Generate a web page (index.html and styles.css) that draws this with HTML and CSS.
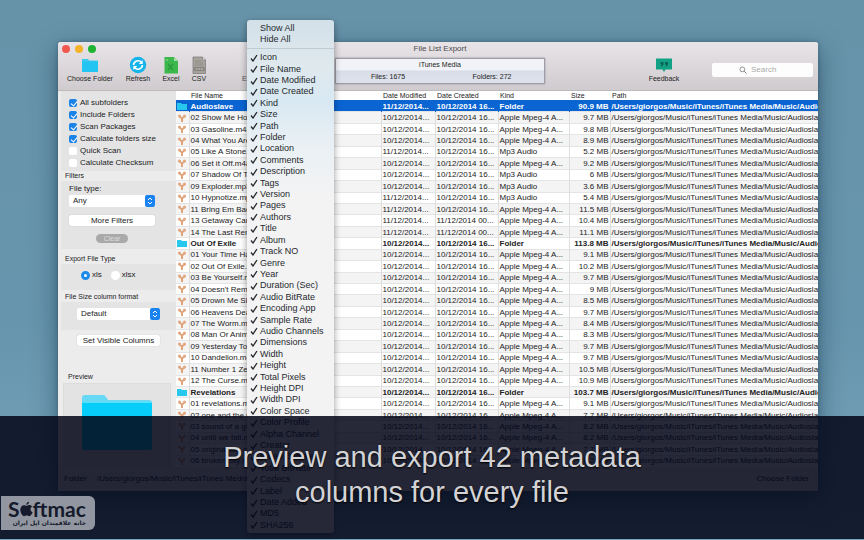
FILE: index.html
```html
<!DOCTYPE html>
<html lang="en">
<head>
<meta charset="utf-8">
<title>File List Export</title>
<link rel="stylesheet" href="styles.css">
</head>
<body>
<main class="desktop">
  <section class="window">
    <header class="chrome">
      <div class="titlebar">
        <div class="lights"><i class="light red"></i><i class="light yellow"></i><i class="light green"></i></div>
        <h1 class="title">File List Export</h1>
      </div>
      <div class="toolbar">
        <div class="tools">
          <button class="tool tool-choose"><svg viewBox="0 0 18 18" class="ico"><path d="M1 3h6l1 1.500h9V16H1z" fill="#3cc9f0"/><path d="M1 5.500h16V16H1z" fill="#22c5f2"/></svg>Choose Folder</button>
          <button class="tool tool-refresh"><svg viewBox="0 0 18 18" class="ico"><circle cx="9" cy="9" r="8.200" fill="#16b4ea"/><path d="M4.500 9a4.500 4.500 0 0 1 8-2.500M13.500 9a4.500 4.500 0 0 1-8 2.500" fill="none" stroke="#fff" stroke-width="1.600"/><path d="M13.700 4v4H9.800zM4.300 14v-4h3.900z" fill="#fff"/></svg>Refresh</button>
          <button class="tool tool-excel"><svg viewBox="0 0 18 18" class="ico"><path d="M2.500 1h9.500l4 4v12.500H2.500z" fill="#3cb74c"/><path d="M12 1v4h4z" fill="#a4dfa9"/><path d="M6 8l5 6M11 8l-5 6" stroke="#2a9a3c" stroke-width="1.600"/><path d="M4 3h2v2H4z" fill="#69cc73"/></svg>Excel</button>
          <button class="tool tool-csv"><svg viewBox="0 0 18 18" class="ico"><path d="M3 1h9.500l3 3v13.500H3z" fill="#a5a39b" stroke="#777" stroke-width=".7"/><path d="M12.500 1v3h3" fill="#ddd" stroke="#777" stroke-width=".6"/><path d="M5 5h6M5 7h8M5 9h8" stroke="#8a8983" stroke-width=".8"/><path d="M4 11h10.500v4H4z" fill="#84827c"/><path d="M5.500 13h2M8.300 13h2M11 13h2" stroke="#b8b6af" stroke-width="1.400"/></svg>CSV</button>
          <button class="tool tool-export"><span class="ico"></span>Export</button>
        </div>
        <div class="status">
          <div class="status-name">iTunes Media</div>
          <div class="status-counts"><span>Files: 1675</span><span>Folders: 272</span></div>
        </div>
        <div class="actions">
          <button class="tool tool-feedback"><svg viewBox="0 0 18 18" class="ico"><path d="M1 2.500h16v11h-6.500L9 16l-1.500-2.500H1z" fill="#12a184"/><path d="M5.500 6h3v2.500L7 10.500H6l.8-2H5.500zM10 6h3v2.500l-1.500 2h-1l.8-2H10z" fill="#0b6353"/></svg>Feedback</button>
          <label class="search"><svg viewBox="0 0 10 10" class="glass"><circle cx="4.200" cy="4.200" r="3" fill="none" stroke="#777" stroke-width="1"/><path d="M6.500 6.500L9.300 9.300" stroke="#777" stroke-width="1.200"/></svg><input type="search" placeholder="Search" aria-label="Search"></label>
        </div>
      </div>
    </header>

    <div class="content">
      <aside class="sidebar">
        <div class="checks">
          <label class="check"><input type="checkbox" checked>All subfolders</label>
          <label class="check"><input type="checkbox" checked>Include Folders</label>
          <label class="check"><input type="checkbox" checked>Scan Packages</label>
          <label class="check"><input type="checkbox" checked>Calculate folders size</label>
          <label class="check"><input type="checkbox">Quick Scan</label>
          <label class="check"><input type="checkbox">Calculate Checksum</label>
        </div>
        <h2 class="group">Filters</h2>
        <div class="panel filters">
          <label class="field" for="type">File type:</label>
          <span class="picker"><select id="type"><option>Any</option></select><svg viewBox="0 0 10 12" class="stepper"><rect width="10" height="12" rx="2" fill="#1b83f0"/><path d="M3 5l2-2 2 2M3 7l2 2 2-2" fill="none" stroke="#fff"/></svg></span>
          <button class="push">More Filters</button>
          <button class="clear">Clear</button>
        </div>
        <h2 class="group">Export File Type</h2>
        <div class="panel radios">
          <label class="radio"><input type="radio" name="format" checked>xls</label>
          <label class="radio"><input type="radio" name="format">xlsx</label>
        </div>
        <h2 class="group">File Size column format</h2>
        <div class="panel sizes">
          <span class="picker"><select aria-label="File Size column format"><option>Default</option></select><svg viewBox="0 0 10 12" class="stepper"><rect width="10" height="12" rx="2" fill="#1b83f0"/><path d="M3 5l2-2 2 2M3 7l2 2 2-2" fill="none" stroke="#fff"/></svg></span>
        </div>
        <button class="push columns">Set Visible Columns</button>
        <h2 class="group preview-title">Preview</h2>
        <div class="preview">
          <svg viewBox="0 0 70 56" class="big-folder"><path d="M0 3q0-3 3-3h18q2 0 3 2l2 3h41q3 0 3 3v6H0z" fill="#67d9f7"/><path d="M0 9q0-2 2-2h66q2 0 2 2v44q0 2-2 2H2q-2 0-2-2z" fill="#06cdf9"/><path d="M1 7.500h68" stroke="#4fe4ff"/></svg>
        </div>
      </aside>

      <div class="listing">
        <table class="files">
          <colgroup><col class="c-icon"><col class="c-name"><col class="c-mod"><col class="c-made"><col class="c-kind"><col class="c-size"><col></colgroup>
          <thead><tr><th></th><th>File Name</th><th>Date Modified</th><th>Date Created</th><th>Kind</th><th>Size</th><th>Path</th></tr></thead>
          <tbody id="rows"></tbody>
        </table>
      </div>
    </div>

    <footer class="pathbar">
      <span class="path-label">Folder</span><span class="path-value">/Users/giorgos/Music/iTunes/iTunes Media</span><button class="path-choose">Choose Folder</button>
    </footer>
  </section>

  <div class="menu">
    <div class="menu-top"><button>Show All</button><button>Hide All</button></div>
    <ul class="menu-list" id="menu"></ul>
  </div>

  <div class="caption"><p>Preview and export 42 metadata<br>columns for every file</p></div>
  <div class="brand">
    <div class="brand-name">S<svg viewBox="0 0 12 14" class="apple"><path d="M8.300.3c.1 1.500-1.200 2.900-2.500 2.800C5.700 1.700 7 .4 8.300.3zM6 4.100c.7 0 1.500-.7 2.600-.7 1 0 2 .5 2.600 1.400-2.200 1.300-1.800 4.400.5 5.200-.5 1.500-1.800 3.600-3.100 3.600-.9 0-1.300-.5-2.400-.5s-1.500.5-2.400.5C2.200 13.600.3 10.500.3 7.700c0-2.700 1.700-4.200 3.300-4.200 1.100 0 1.800.6 2.400.6z" fill="currentColor"/></svg>ftmac</div>
    <div class="brand-sub" lang="fa" dir="rtl">خانه علاقمندان اپل ایران</div>
  </div>
</main>
<script src="script.js"></script>
</body>
</html>
```
FILE: styles.css
```css
* { box-sizing: border-box; }
body { margin: 0; font: 8px/10px "Liberation Sans", Arial, sans-serif; color: #222; }
button, input, select { font: inherit; color: inherit; border: 0; padding: 0; margin: 0; background: none; }
h1, h2, p, ul { margin: 0; padding: 0; font-weight: normal; list-style: none; }
svg { display: block; }

.desktop { position: relative; display: flex; height: 100vh; padding: 42px 46px 49px 58px; overflow: hidden; background: linear-gradient(#6793a9, #6695ad 60%, #78a4bb); }
.window { flex: 1; min-width: 0; display: flex; flex-direction: column; overflow: hidden; border-radius: 3px 3px 0 0; background: #ededee; box-shadow: 0 8px 24px rgba(10, 40, 65, .5), 0 0 4px rgba(10, 30, 50, .3); }

.chrome { height: 49px; background: linear-gradient(#e8e4e8, #cfcbcf); border-bottom: 1px solid #bdbabd; }
.titlebar { display: grid; grid-template-columns: 1fr auto 1fr; align-items: center; height: 14px; padding-left: 4px; }
.lights { display: flex; gap: 5px; }
.light { width: 8px; height: 8px; border-radius: 50%; }
.red { background: #f25850; }
.yellow { background: #f5b32b; }
.green { background: #1fb431; }
.title { font-size: 8px; line-height: 14px; color: #4c4a4c; }
.toolbar { display: grid; grid-template-columns: 277px 210px 1fr; align-items: start; }
.tools, .actions { display: flex; }
.tool { display: flex; flex-direction: column; align-items: center; font-size: 7px; line-height: 10px; color: #222; }
.ico { width: 18px; height: 18px; }
.tool-choose { width: 64px; }
.tool-refresh { width: 32px; }
.tool-excel { width: 34px; }
.tool-csv { width: 22px; }
.tool-export { width: 84px; color: #555; }
.status { display: flex; flex-direction: column; height: 26px; margin-top: 2px; border: 1px solid #9c9da8; background: linear-gradient(#f1f3f8 45%, #d9dde8 50%, #dfe2ec); font-size: 7px; line-height: 12px; text-align: center; box-shadow: 0 0 2px #999; }
.status-counts { display: grid; grid-template-columns: 1fr 1fr; }
.actions { justify-content: flex-end; padding-right: 5px; }
.tool-feedback { width: 40px; margin-right: 28px; }
.search { display: flex; align-items: center; gap: 4px; width: 101px; height: 14px; margin-top: 7px; padding-left: 27px; border-radius: 2px; background: #fdfdfd; }
.glass { width: 8px; height: 8px; }
.search input { width: 50px; outline: 0; }
.search input::placeholder { color: #aaa; }

.content { flex: 1; min-height: 0; display: flex; }
.sidebar { display: flex; flex-direction: column; width: 118px; background: #ececed; }
.checks { padding: 6px 0 2px 8px; background: #e4e4e5; margin-left: 3px; }
.check { display: flex; align-items: center; gap: 3px; height: 12px; }
.check input { appearance: none; width: 8px; height: 8px; border-radius: 2px; background: #fff; }
.check input:checked { background: #1b83e6; }
.check input:checked::after { content: ""; display: block; width: 3px; height: 5px; margin: 1px 0 0 3px; border: solid #fff; border-width: 0 1px 1px 0; rotate: 40deg; }
.group { padding-left: 7px; font-size: 7px; line-height: 10px; }
.panel { margin-left: 3px; background: #e4e4e5; }
.filters { display: flex; flex-direction: column; height: 68px; padding: 2px 0 0 8px; }
.picker { display: flex; align-items: center; width: 86px; height: 12px; background: #fff; border-radius: 2px; }
.picker select { appearance: none; flex: 1; padding-left: 4px; }
.stepper { width: 10px; height: 12px; }
.field { line-height: 12px; }
.push { width: 86px; height: 11px; margin-top: 8px; border-radius: 2px; background: #fff; box-shadow: 0 0 1px #aaa; }
.clear { width: 32px; height: 9px; margin: 8px 0 0 27px; border-radius: 5px; background: #a9a9aa; color: #ddd; font-size: 7px; line-height: 9px; }
.filters + .group { padding-top: 5px; }
.radios { display: flex; gap: 9px; height: 26px; padding: 0 0 4px 20px; align-items: center; }
.radio { display: flex; align-items: center; gap: 2px; }
.radio input { appearance: none; width: 9px; height: 9px; border-radius: 50%; background: #fff; }
.radio input:checked { background: #fff; border: 3px solid #1b8ae8; }
.radios + .group { padding-top: 2px; }
.sizes { height: 28px; padding: 6px 0 0 16px; }
.sizes .picker { width: 83px; }
.columns { align-self: start; margin: 5px 0 0 19px; width: 83px; }
.preview-title { margin-top: 26px; padding-left: 10px; }
.preview { flex: 1; margin: 1px 5px 0; padding: 11px 0 0 18px; border: 1px solid #dcdcdd; background: #e3e3e4; }
.big-folder { width: 70px; height: 56px; }

.listing { flex: 1; min-width: 0; overflow: hidden; background: #fff; }
.files { width: 100%; height: 375px; border-collapse: collapse; table-layout: fixed; font-size: 8px; line-height: 9px; }
.c-icon { width: 13px; }
.c-name { width: 192px; }
.c-mod { width: 54px; }
.c-made { width: 63px; }
.c-kind { width: 71px; }
.c-size { width: 41px; }
.files th { height: 9px; padding: 0 2px; font-size: 7px; font-weight: normal; text-align: left; white-space: nowrap; }
.files td { padding: 0 1px; overflow: hidden; white-space: nowrap; border-right: 1px solid #dedede; border-top: 1px solid #e4e4e4; }
.files td:nth-child(6) { text-align: right; }
.files td:last-child { border-right: 0; }
.files tbody tr:nth-child(even) { background: #f4f4f5; }
.files tbody .folder { font-weight: bold; }
.files tbody tr.selected { background: #0a64d2; color: #fff; }
.files .selected td { border-color: #0a64d2; }
.mini { width: 10px; height: 8px; }

.pathbar { display: flex; align-items: center; height: 24px; padding: 0 9px 0 6px; background: #e6e6e7; }
.path-label { width: 33px; }
.path-choose { margin-left: auto; }

.menu { position: absolute; left: 247px; top: 20px; width: 87px; height: 513px; display: flex; flex-direction: column; border-radius: 3px; font-size: 9px; line-height: 11px; color: #26292e; background: linear-gradient(#d3e0e8, #dfe9ee 9%, #d8e8f2 16%, #e9f0f4 24%, #f3f3f4 34%); box-shadow: 0 2px 7px rgba(0, 0, 0, .4); }
.menu-top { display: flex; flex-direction: column; height: 29px; padding: 3px 0 0 13px; border-bottom: 1px solid #bccbd4; }
.menu-top button { height: 11px; text-align: left; }
.menu-list { flex: 1; display: flex; flex-direction: column; padding: 3px 0 2px; }
.menu-list li { flex: 1; min-height: 0; display: flex; align-items: center; gap: 2px; padding-left: 3px; white-space: nowrap; }
.tick { width: 8px; height: 8px; }

.caption { position: absolute; left: 0; right: 0; top: 416px; bottom: 1px; padding: 24px 0 0; background: rgba(3, 6, 25, .86); color: #d3d3d6; font-size: 29px; line-height: 35px; text-align: center; text-shadow: 0 1px 2px #000; }
.brand { position: absolute; left: 1px; bottom: 10px; width: 94px; height: 34px; padding: 3px 9px 0 7px; border-radius: 0 6px 6px 0; background: #9296a0; color: #151a2c; }
.brand-name { display: flex; align-items: center; font: bold 21px/20px Lato, sans-serif; }
.apple { width: 13px; height: 16px; }
.brand-sub { font: bold 6px/8px "DejaVu Sans", sans-serif; white-space: nowrap; }
```
FILE: script.js
```js
const A = 'Apple Mpeg-4 A...', M = 'Mp3 Audio', F = 'Folder';
const d10 = '10/12/2014', d11 = '11/12/2014';
// name, modified, created, kind, size in MB
const files = [
  ['Audioslave', d11, d10, F, '90.9'],
  ['02 Show Me How to Live.m4a', d10, d10, A, '9.7'],
  ['03 Gasoline.m4a', d10, d10, A, '9.8'],
  ['04 What You Are.m4a', d10, d10, A, '8.9'],
  ['05 Like A Stone.mp3', d11, d10, M, '5.2'],
  ['06 Set it Off.m4a', d10, d10, A, '9.2'],
  ['07 Shadow Of The Sun.mp3', d10, d10, M, '6'],
  ['09 Exploder.mp3', d10, d10, M, '3.6'],
  ['10 Hypnotize.mp3', d11, d10, M, '5.4'],
  ['11 Bring Em Back Alive.m4a', d11, d10, A, '11.5'],
  ['13 Getaway Car.m4a', d11, d11, A, '10.4'],
  ['14 The Last Remaining Light.m4a', d11, d11, A, '11.1'],
  ['Out Of Exile', d10, d10, F, '113.8'],
  ['01 Your Time Has Come.m4a', d10, d10, A, '9.1'],
  ['02 Out Of Exile.m4a', d10, d10, A, '10.2'],
  ['03 Be Yourself.m4a', d10, d10, A, '9.7'],
  ["04 Doesn't Remind Me.m4a", d10, d10, A, '9'],
  ['05 Drown Me Slowly.m4a', d10, d10, A, '8.5'],
  ['06 Heavens Dead.m4a', d10, d10, A, '9.7'],
  ['07 The Worm.m4a', d10, d10, A, '8.4'],
  ['08 Man Or Animal.m4a', d10, d10, A, '8.3'],
  ['09 Yesterday To Tomorrow.m4a', d10, d10, A, '9.7'],
  ['10 Dandelion.m4a', d10, d10, A, '9.7'],
  ['11 Number 1 Zero.m4a', d10, d10, A, '10.5'],
  ['12 The Curse.m4a', d10, d10, A, '10.9'],
  ['Revelations', d10, d10, F, '103.7'],
  ['01 revelations.m4a', d10, d10, A, '9.1'],
  ['02 one and the same.m4a', d10, d10, A, '7.7'],
  ['03 sound of a gun.m4a', d10, d10, A, '8.2'],
  ['04 until we fall.m4a', d10, d10, A, '8.2'],
  ['05 original fire.m4a', d10, d10, A, '7.7'],
  ['06 broken city.m4a', d10, d10, A, '8.2'],
];
const folderIcon = '<svg class="mini" viewBox="0 0 10 8"><path d="M0 1h4l1 1h5v6H0z" fill="#27c7ee"/></svg>';
const audioIcon = '<svg class="mini" viewBox="0 0 10 8"><path d="M2 2l3 2.500L8 2M5 4v4" fill="none" stroke="#dfa47c" stroke-width="2"/><circle cx="2.500" cy="2" r="1.600" fill="#e2a884"/><circle cx="7.500" cy="2" r="1.600" fill="#e2a884"/></svg>';
document.getElementById('rows').innerHTML = files.map(([name, mod, made, kind, size], i) => {
  const cls = (kind === F ? 'folder' : '') + (i === 0 ? ' selected' : '');
  const path = '/Users/giorgos/Music/iTunes/iTunes Media/Music/' + (kind === F ? 'Audio' : 'Audioslav');
  const cells = [kind === F ? folderIcon : audioIcon, name, mod + '...', made + (made === d11 ? ' 00...' : ' 16...'), kind, size + ' MB', path];
  return `<tr class="${cls}">${cells.map(c => `<td>${c}</td>`).join('')}</tr>`;
}).join('');

const columns = ['Icon', 'File Name', 'Date Modified', 'Date Created', 'Kind', 'Size', 'Path', 'Folder', 'Location', 'Comments', 'Description', 'Tags', 'Version', 'Pages', 'Authors', 'Title', 'Album', 'Track NO', 'Genre', 'Year', 'Duration (Sec)', 'Audio BitRate', 'Encoding App', 'Sample Rate', 'Audio Channels', 'Dimensions', 'Width', 'Height', 'Total Pixels', 'Height DPI', 'Width DPI', 'Color Space', 'Color Profile', 'Alpha Channel', 'Creator', 'Video BitRate', 'Total BitRate', 'Codecs', 'Label', 'Date Added', 'MD5', 'SHA256'];
document.getElementById('menu').innerHTML = columns.map(c =>
  `<li><svg class="tick" viewBox="0 0 8 8"><path d="M1 4.500l2 2.500L7 1" fill="none" stroke="currentColor" stroke-width="1.300"/></svg>${c}</li>`).join('');
```
